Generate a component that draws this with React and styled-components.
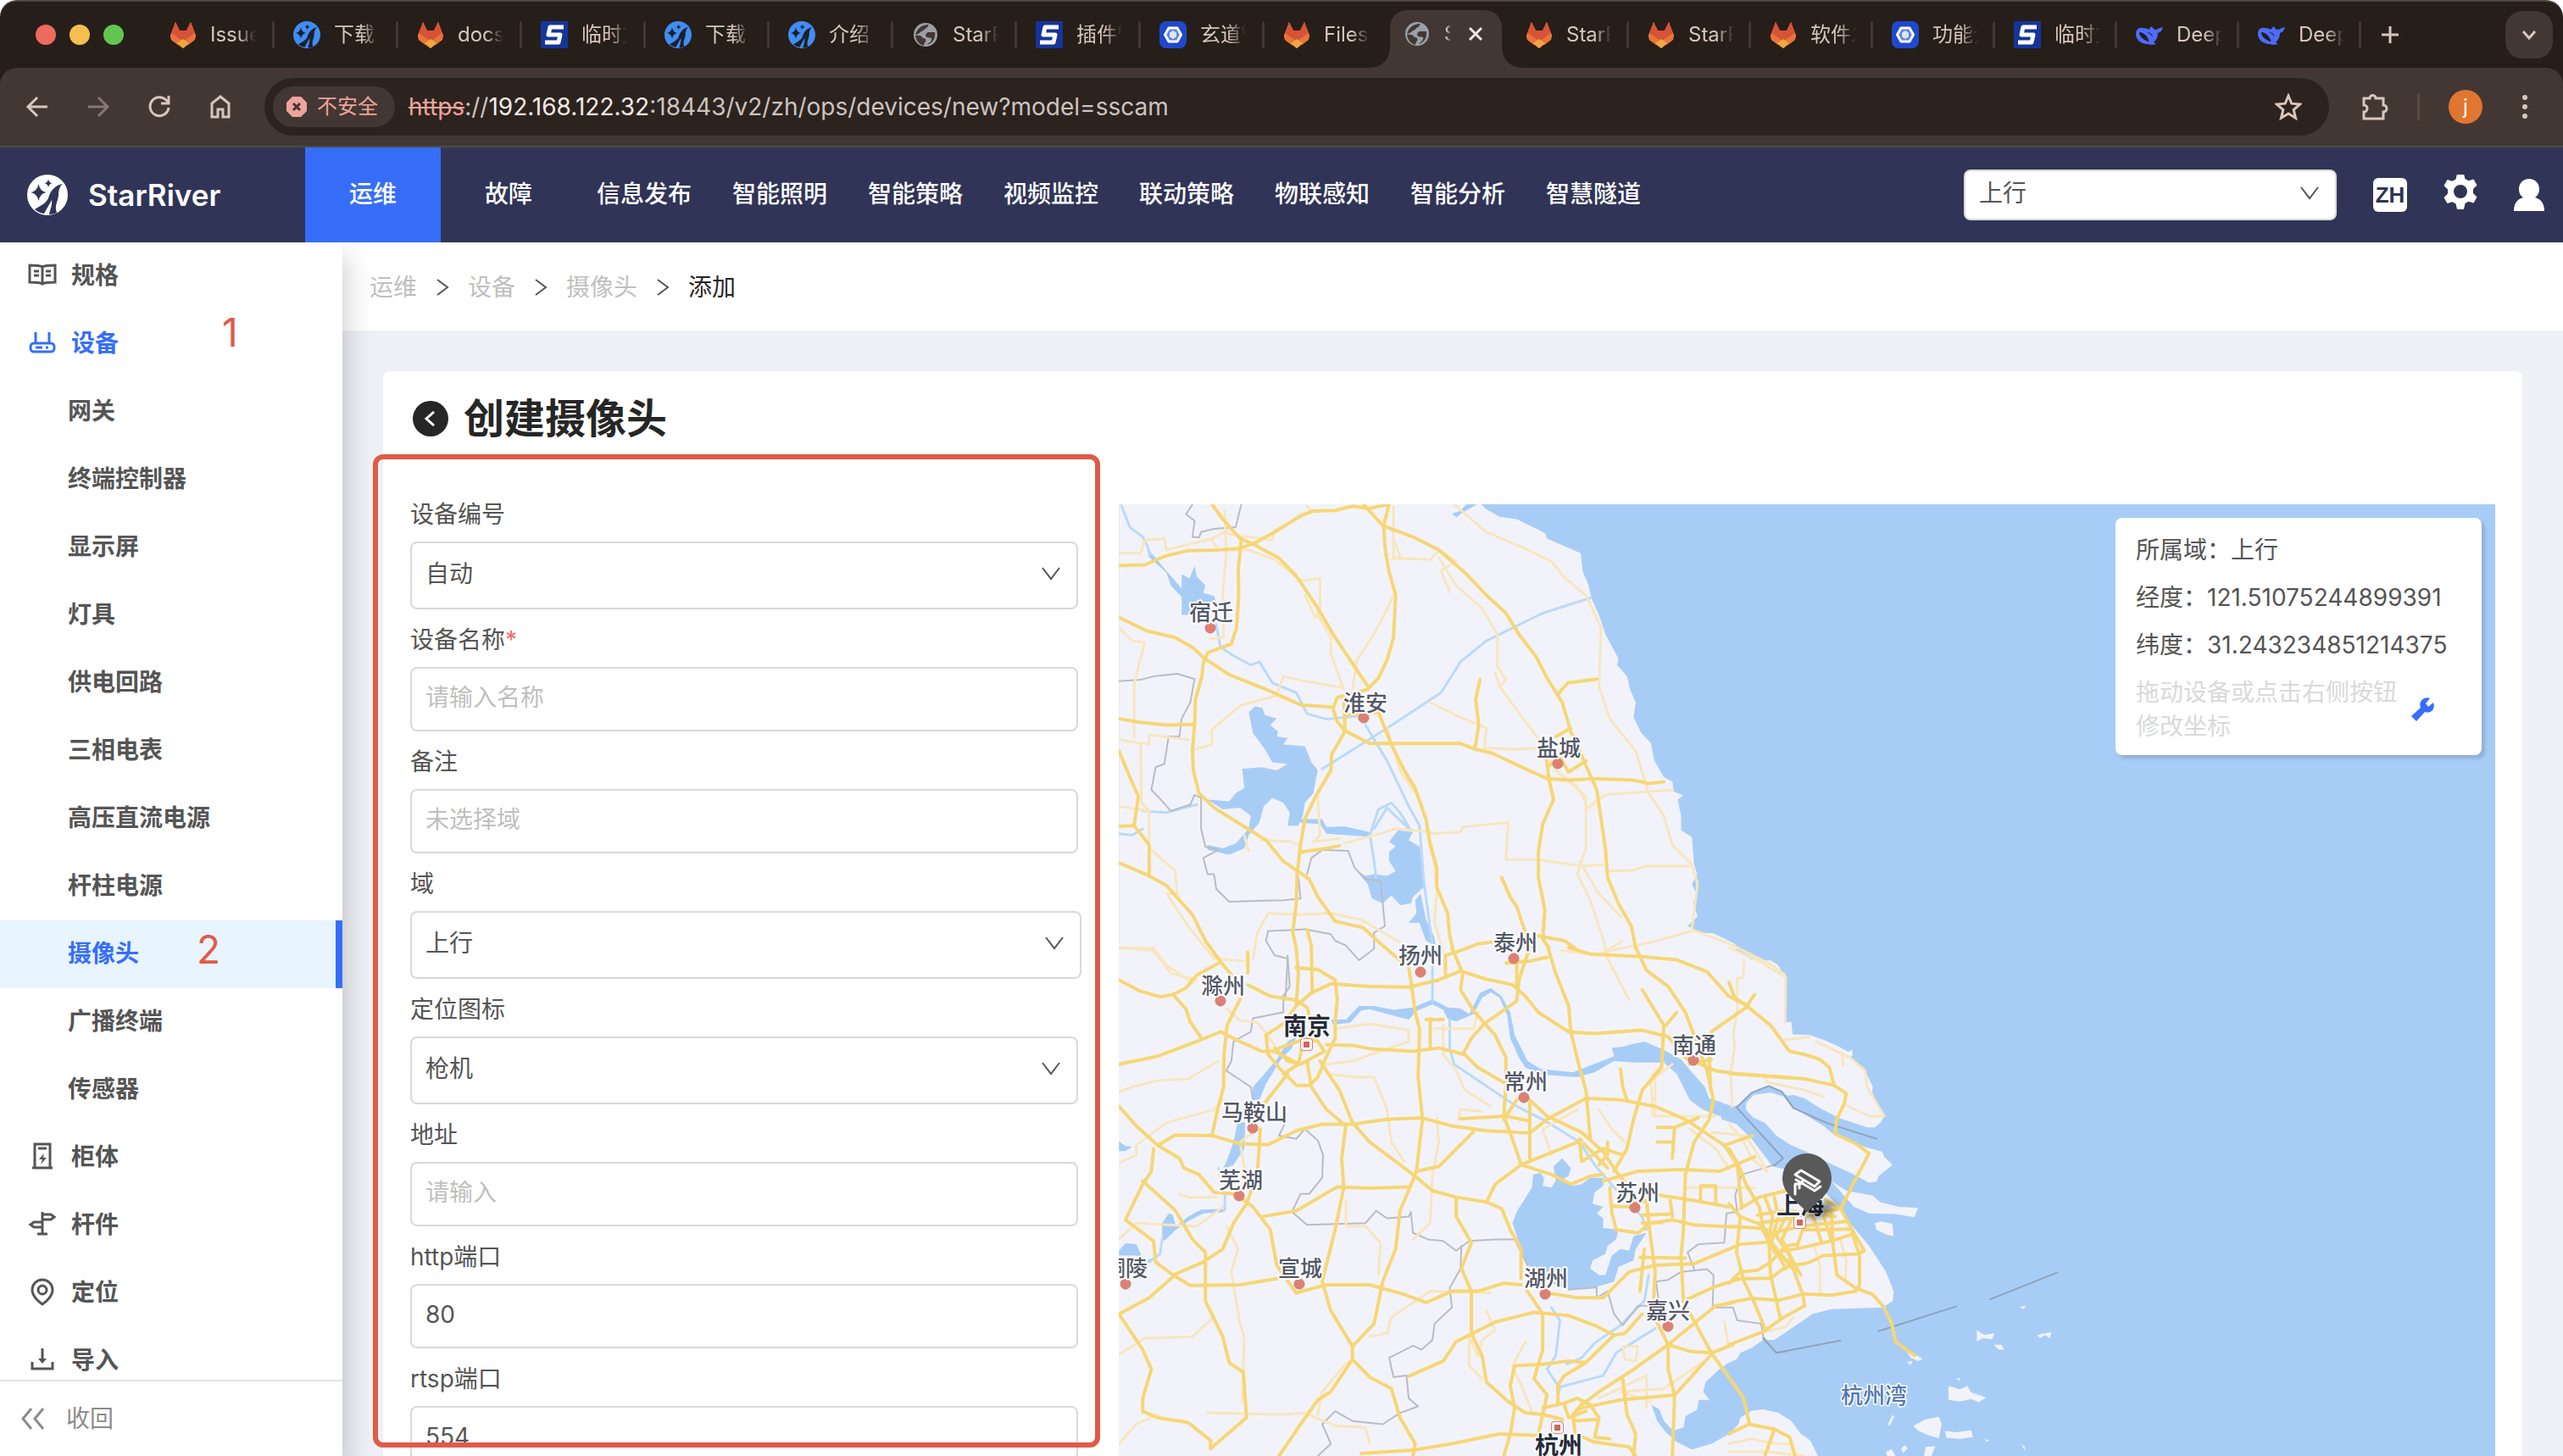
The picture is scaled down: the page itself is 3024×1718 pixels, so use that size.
import React, { useState } from "react";
import styled, { createGlobalStyle, css } from "styled-components";

const GlobalStyle = createGlobalStyle`
  * {
    box-sizing: border-box;
  }

  body {
    margin: 0;
    background: #fff;
    color: #555;
    font-family: Inter, "Noto Sans CJK SC", sans-serif;
    font-size: 28px;
    line-height: 40px;
  }

  button,
  input,
  select {
    font: inherit;
    color: inherit;
  }

  button {
    display: flex;
    align-items: center;
    justify-content: center;
    padding: 0;
    border: 0;
    background: none;
    cursor: pointer;
  }

  a {
    color: inherit;
    text-decoration: none;
  }

  svg {
    display: block;
    flex: none;
  }
`;

const Shell = styled.div`
  display: flex;
  flex-direction: column;
  height: 100vh;
  overflow: hidden;
`;

/* browser chrome */

const Browser = styled.div`
  flex: none;
  border-top: 2px solid #4c4744;
  border-radius: 20px 20px 0 0;
  background: #261e18;
  color: #d8c6bc;
  font-size: 24px;
`;

const TabStrip = styled.div`
  display: flex;
  align-items: center;
  height: 78px;
  padding-right: 12px;
`;

const TrafficLights = styled.div`
  display: flex;
  gap: 16px;
  width: 178px;
  padding-left: 42px;
`;

const Light = styled.span`
  width: 24px;
  height: 24px;
  border-radius: 50%;
  background: ${props => props.$color};
`;

const Tab = styled.button`
  position: relative;
  justify-content: flex-start;
  gap: 16px;
  width: ${props => (props.$wide ? 146 : 144)}px;
  height: 32px;
  padding-left: 22px;

  &::after {
    content: "";
    width: 3px;
    height: 32px;
    margin-left: auto;
    border-radius: 2px;
    background: ${props => (props.$last ? "transparent" : "#433733")};
  }
`;

const TabText = styled.span`
  width: 54px;
  overflow: hidden;
  text-align: left;
  white-space: nowrap;
  mask-image: linear-gradient(90deg, #000 60%, transparent);
`;

const ActiveTab = styled.div`
  position: relative;
  display: flex;
  align-items: center;
  align-self: flex-end;
  width: 132px;
  height: 68px;
  margin: 0 6px 0 2px;
  padding: 0 22px 12px 16px;
  border-radius: 20px 20px 0 0;
  background: #433733;
  color: #f3e6df;

  &::before,
  &::after {
    content: "";
    position: absolute;
    bottom: 0;
    width: 22px;
    height: 22px;
  }

  &::before {
    right: 100%;
    background: radial-gradient(circle at 0 0, transparent 21px, #433733 22px);
  }

  &::after {
    left: 100%;
    background: radial-gradient(
      circle at 100% 0,
      transparent 21px,
      #433733 22px
    );
  }
`;

const ActiveTitle = styled.span`
  width: 8px;
  margin: 0 auto 0 16px;
  overflow: hidden;
  mask-image: linear-gradient(90deg, #000 20%, transparent);
`;

const NewTab = styled.button`
  width: 68px;
  height: 40px;
`;

const TabSearch = styled.button`
  width: 56px;
  height: 56px;
  margin-left: auto;
  border-radius: 20px;
  background: #433733;
`;

const Toolbar = styled.div`
  display: flex;
  align-items: center;
  height: 94px;
  border-bottom: 2px solid #4b4a45;
  border-radius: 20px 20px 0 0;
  background: #433733;
`;

const ToolButtons = styled.div`
  display: flex;
  width: 312px;
  padding-left: 8px;
`;

const ToolButton = styled.button`
  width: 72px;
  height: 48px;
  opacity: ${props => (props.$dim ? 0.45 : 1)};
`;

const AddressBar = styled.div`
  display: flex;
  flex: 1;
  align-items: center;
  height: 68px;
  padding: 0 32px 0 10px;
  border-radius: 34px;
  background: #2c231e;
`;

const Unsafe = styled.button`
  justify-content: flex-start;
  gap: 12px;
  width: 144px;
  height: 48px;
  padding-left: 16px;
  border-radius: 24px;
  background: #433733;
  color: #eca49c;
`;

const Url = styled.span`
  flex: 1;
  padding-left: 16px;
  color: #cdc4bf;
  font-size: 28px;
  white-space: nowrap;

  s {
    color: #eca49c;
  }

  b {
    color: #f3eae5;
    font-weight: 400;
  }
`;

const ToolbarEnd = styled.div`
  display: flex;
  align-items: center;
  gap: 34px;
  width: 276px;
  padding-left: 38px;
`;

const ToolDivider = styled.span`
  width: 3px;
  height: 32px;
  background: #5d4a41;
`;

const Avatar = styled.button`
  width: 40px;
  height: 40px;
  border-radius: 50%;
  background: #e0762f;
  color: #fff;
`;

/* application header */

const Header = styled.header`
  display: flex;
  flex: none;
  align-items: center;
  height: 112px;
  padding-right: 22px;
  background: #303457;
  color: #fff;
`;

const Brand = styled.a`
  display: flex;
  align-items: center;
  gap: 24px;
  width: 360px;
  padding-left: 32px;
  font-size: 35px;
  font-weight: 600;
`;

const Nav = styled.nav`
  display: flex;
  flex: 1;
  height: 100%;
`;

const NavItem = styled.a`
  display: flex;
  align-items: center;
  justify-content: center;
  width: 160px;
  padding-bottom: 2px;
  background: ${props => (props.$active ? "#366ef9" : "transparent")};
  font-weight: 500;
`;

const HeaderTools = styled.div`
  display: flex;
  align-items: center;
  gap: 43px;
`;

const LangBadge = styled.button`
  width: 40px;
  height: 40px;
  border-radius: 6px;
  background: #fff;
  color: #303457;
  font-family: "Liberation Sans", sans-serif;
  font-size: 26px;
  font-weight: 700;
`;

/* form controls */

const controlBox = css`
  width: 100%;
  height: ${props => props.$height || 76}px;
  padding: 0 16px 4px;
  border: 2px solid #d9d9d9;
  border-radius: 8px;
  background: #fff;
  outline: none;
`;

const SelectWrap = styled.div`
  position: relative;
  width: ${props => props.$width};
  color: #555;
`;

const SelectBox = styled.select`
  ${controlBox}
  appearance: none;
`;

const SelectArrow = styled.span`
  position: absolute;
  top: calc(50% - 14px);
  right: 20px;
  pointer-events: none;
`;

const TextBox = styled.input`
  ${controlBox}

  &::placeholder {
    color: #bfbfbf;
    opacity: 1;
  }
`;

/* side menu */

const Body = styled.div`
  display: flex;
  flex: 1;
  min-height: 0;
`;

const Sidebar = styled.aside`
  z-index: 1;
  display: flex;
  flex: none;
  flex-direction: column;
  width: 404px;
  background: #fff;
  box-shadow: 4px 16px 32px rgba(0, 0, 0, 0.2);
  clip-path: inset(0 -40px 0 0);
`;

const Menu = styled.nav`
  flex: 1;
  overflow: hidden;
`;

const MenuItem = styled.a`
  position: relative;
  display: flex;
  align-items: center;
  gap: 16px;
  height: 80px;
  padding: 0 0 2px ${props => (props.$sub ? 80 : 32)}px;
  border-right: 8px solid ${props => (props.$selected ? "#366ef9" : "transparent")};
  background: ${props => (props.$selected ? "#e8f4ff" : "transparent")};
  color: ${props => (props.$active ? "#366ef9" : "#555")};
  font-weight: 600;
`;

const Mark = styled.span`
  position: absolute;
  top: ${props => props.$top}px;
  left: ${props => props.$left}px;
  color: #e05a47;
  font-size: 46px;
  font-weight: 400;
`;

const Collapse = styled.button`
  justify-content: flex-start;
  gap: 26px;
  height: 90px;
  padding-left: 24px;
  border-top: 2px solid #e4e4e4;
  color: #8c8c8c;
`;

/* page */

const Main = styled.main`
  position: relative;
  display: flex;
  flex: 1;
  flex-direction: column;
  min-width: 0;
  overflow: hidden;
  background: #eff0f5;
`;

const Breadcrumb = styled.nav`
  display: flex;
  flex: none;
  align-items: center;
  gap: 20px;
  height: 104px;
  padding: 2px 0 0 32px;
  background: #fff;
  color: #bfbfbf;
`;

const CurrentCrumb = styled.span`
  color: #262626;
`;

const Card = styled.section`
  flex: none;
  margin: 48px 48px 0;
  padding: 24px 32px;
  border-radius: 8px;
  background: #fff;
`;

const TitleRow = styled.div`
  display: flex;
  align-items: center;
  gap: 18px;
  height: 64px;
  padding-left: 3px;
`;

const Title = styled.h1`
  margin: 0;
  color: #262626;
  font-size: 48px;
  font-weight: 700;
  line-height: 64px;
`;

const BackButton = styled.button`
  width: 42px;
  height: 42px;
  border-radius: 50%;
  background: #262626;
`;

const Columns = styled.div`
  display: flex;
  gap: 44px;
  margin-top: 69px;
`;

const Form = styled.form`
  flex: none;
  width: 792px;
  margin-top: -8px;
`;

const Field = styled.div`
  margin-bottom: 16px;
`;

const FieldLabel = styled.label`
  display: block;
  height: 52px;

  span {
    color: #f56c6c;
  }
`;

const FieldControl = styled.div`
  width: ${props => (props.$full ? "100%" : "788px")};
`;

const FocusFrame = styled.div`
  position: absolute;
  top: 250px;
  bottom: 10px;
  left: 36px;
  width: 858px;
  border: 6px solid #e05a47;
  border-radius: 12px;
  pointer-events: none;
`;

const MapPane = styled.div`
  position: relative;
  flex: 1;
  min-width: 0;
  overflow: hidden;
  background: #a7cdf7;

  > svg {
    position: absolute;
    width: 100%;
    height: 100%;
  }
`;

const InfoCard = styled.div`
  position: absolute;
  top: 16px;
  right: 16px;
  width: 432px;
  height: 280px;
  padding: 10px 24px;
  border-radius: 8px;
  background: #fff;
  box-shadow: 4px 4px 4px rgba(0, 0, 0, 0.15);
`;

const InfoLine = styled.div`
  height: 56px;
  line-height: 56px;
  white-space: nowrap;
`;

const InfoHint = styled.div`
  display: flex;
  align-items: center;
  gap: 16px;
  padding-top: 8px;
  color: #d9d9d9;

  p {
    width: 308px;
    margin: 0;
  }
`;

/* icons */

const Logo = ({ size, color = "#fff", cut = "#303457" }) => (
  <svg width={size} height={size} viewBox="0 0 48 48">
    <circle cx="24" cy="24" r="24" fill={color} />
    <g fill={cut}>
      <path d="M13.500 11q1.500 8.500 9 10q-7.500 1.500-9 10q-1.500-8.500-9-10q7.500-1.500 9-10z" />
      <path d="M25 5.500q.8 4 4.500 4.700q-3.700.8-4.500 4.800q-.8-4-4.500-4.800q3.700-.7 4.500-4.700z" />
      <path d="M42 11c-9 1-15 9-17 17-3 6-8 8-16 13 3 3 7 4.500 11 5l9-16c1 6-2 11-3 17 4 0 7-1 9-2-3-9 1-12 2-20 0-6 1-11 5-14z" />
    </g>
  </svg>
);

const Fox = () => (
  <svg width="32" height="32" viewBox="0 0 32 32">
    <path d="M7 1l5 10h8l5-10 6 16-2 5-13 10L2 22l-1-5z" fill="#e9743a" />
    <path d="M7 1l5 10h8l5-10 5 13-14 10L2 14z" fill="#d75337" />
    <path d="M1 17l1-3 14 10-6 4-8-6zM31 17l-1-3-14 10 6 4 8-6z" fill="#e9743a" />
    <path d="M9 26l7-5 7 5-7 6z" fill="#efa740" />
  </svg>
);

const SquareS = () => (
  <svg width="32" height="32" viewBox="0 0 32 32">
    <path fill="#16349a" d="M0 0h32v32H0z" />
    <path
      d="M27 7H11l-2 9h14l-2 9H5"
      fill="none"
      stroke="#fff"
      strokeWidth="5"
      strokeLinejoin="round"
    />
  </svg>
);

const Hexagon = () => (
  <svg width="32" height="32" viewBox="0 0 32 32">
    <rect width="32" height="32" rx="8" fill="#1f48cd" />
    <path
      d="M11 8h10l4.500 8L21 24H11l-4.500-8z"
      fill="#5c83e6"
      stroke="#fff"
      strokeWidth="3"
      strokeLinejoin="round"
    />
    <path d="M16 11l4 2.500v5L16 21l-4-2.500v-5z" fill="#dbe5fb" />
  </svg>
);

const Globe = () => (
  <svg width="32" height="32" viewBox="0 0 32 32">
    <circle cx="16" cy="16" r="14" fill="#9aa0a6" />
    <path
      d="M20 4c-2 2-1 4-5 5-1 3-4 2-6 5-2 1-4 2-5 2 2-7 7-12 16-12zM4 17c4-1 8 0 9 3 3 0 4 2 3 4-1 2-2 2-2 5C8 27 5 23 4 17zM19 13h8c1 8-3 13-9 15 2-3 6-4 5-8-3-1-6 0-7-3 0-2 1-3 3-4z"
      fill="#433733"
    />
  </svg>
);

const Whale = () => (
  <svg width="32" height="32" viewBox="0 0 32 32">
    <path
      d="M19 6c1 3 3 4 5 4 2-1 4-2 8-3-1 4-3 6-6 7 0 5-2 8-5 11l3 2c-4 1-7 1-10 0C6 27 0 22 0 15 0 9 4 7 9 8c3 0 5 1 6 2 1-1 2-3 4-4zM4 13c0 5 5 9 11 11 1-1 0-3-3-7-2-2-5-4-8-4zm9 0c3 1 5 3 7 6-1-4-3-6-7-6z"
      fill="#4d6bfe"
      fillRule="evenodd"
    />
  </svg>
);

const favicons = {
  fox: <Fox />,
  star: <Logo size={32} color="#3f8df5" cut="#1c2028" />,
  s: <SquareS />,
  hex: <Hexagon />,
  globe: <Globe />,
  whale: <Whale />,
};

const Line = ({ size = 32, stroke = 3, color = "currentColor", d, children }) => (
  <svg
    width={size}
    height={size}
    viewBox={`0 0 ${size} ${size}`}
    fill="none"
    stroke={color}
    strokeWidth={stroke}
  >
    {d && <path d={d} />}
    {children}
  </svg>
);

const ArrowDown = () => <Line size={24} stroke={2} d="M2 5l10 13L22 5" />;

const Gear = () => (
  <svg width="40" height="48" viewBox="1 1 40 48">
    <path
      d="M17 0h8l1.500 6 4 2.300 6-1.800 4 7-4.500 4.500v5l4.500 4.500-4 7-6-1.800-4 2.300L25 42h-8l-1.500-6.500-4-2.300-6 1.800-4-7L6 23.500v-5L1.500 14l4-7 6 1.800 4-2.300zM21 13a8 8 0 100 16 8 8 0 000-16z"
      fill="#fff"
      fillRule="evenodd"
    />
  </svg>
);

const Person = () => (
  <svg width="36" height="38" viewBox="0 0 36 38">
    <path
      d="M18 0c7 0 12 5 12 12 0 5-2 8-5 10 7 2 11 7 11 16H0c0-9 4-14 11-16-3-2-5-5-5-10C6 5 11 0 18 0z"
      fill="#fff"
    />
  </svg>
);

const menuIcons = {
  book: (
    <Line size={36} stroke={3}>
      <path d="M18 8c-3-2-9-2-15-2v20c6 0 12 0 15 2 3-2 9-2 15-2V6c-6 0-12 0-15 2zv20M8 13h6M8 18h6M22 13h6M22 18h6" />
    </Line>
  ),
  router: (
    <Line size={36} stroke={3}>
      <rect x="4" y="18" width="28" height="10" rx="4" />
      <path d="M10 5v13M26 5v13M10 23h8M22 23h3" />
    </Line>
  ),
  cabinet: (
    <Line size={36} stroke={3}>
      <path d="M9 31V3h18v28M6 31h24M13 8h10" />
      <path d="M20 14l-6 7h4l-2 6 7-8h-4z" fill="currentColor" stroke="none" />
    </Line>
  ),
  pole: (
    <Line size={36} stroke={3}>
      <path d="M18 3v26M12 29h12M18 6h10l4 3-4 3H18zM18 15H8l-4 3 4 3h10z" />
    </Line>
  ),
  pin: (
    <Line size={36} stroke={3}>
      <path d="M18 32C11 27 6 22 6 15a12 12 0 0124 0c0 7-5 12-12 17z" />
      <circle cx="18" cy="15" r="5" />
    </Line>
  ),
  load: (
    <Line size={36} stroke={3}>
      <path d="M6 20v8h24v-8M18 4v15" />
      <path d="M13 16h10l-5 6z" fill="currentColor" stroke="none" />
    </Line>
  ),
};

/* data */

const tabsBefore = [
  ["fox", "Issues"],
  ["star", "下载"],
  ["fox", "docs"],
  ["s", "临时文"],
  ["star", "下载"],
  ["star", "介绍"],
  ["globe", "StarRiver"],
  ["s", "插件管"],
  ["hex", "玄道管"],
  ["fox", "Files"],
];

const tabsAfter = [
  ["fox", "StarRiver"],
  ["fox", "StarRiver"],
  ["fox", "软件发"],
  ["hex", "功能介"],
  ["s", "临时文"],
  ["whale", "DeepSeek"],
  ["whale", "DeepSeek"],
];

const navItems = [
  "运维",
  "故障",
  "信息发布",
  "智能照明",
  "智能策略",
  "视频监控",
  "联动策略",
  "物联感知",
  "智能分析",
  "智慧隧道",
];

const menuItems = [
  { text: "规格", icon: "book" },
  { text: "设备", icon: "router", active: true, mark: { text: "1", left: 262, top: 6 } },
  { text: "网关" },
  { text: "终端控制器" },
  { text: "显示屏" },
  { text: "灯具" },
  { text: "供电回路" },
  { text: "三相电表" },
  { text: "高压直流电源" },
  { text: "杆柱电源" },
  {
    text: "摄像头",
    active: true,
    selected: true,
    mark: { text: "2", left: 232, top: 14 },
  },
  { text: "广播终端" },
  { text: "传感器" },
  { text: "柜体", icon: "cabinet" },
  { text: "杆件", icon: "pole" },
  { text: "定位", icon: "pin" },
  { text: "导入", icon: "load" },
];

const fields = [
  { id: "code", label: "设备编号", options: ["自动", "手动"] },
  { id: "name", label: "设备名称", required: true, placeholder: "请输入名称" },
  { id: "remark", label: "备注", placeholder: "未选择域" },
  { id: "domain", label: "域", options: ["上行", "下行"], full: true },
  { id: "icon", label: "定位图标", options: ["枪机", "球机"] },
  { id: "address", label: "地址", placeholder: "请输入" },
  { id: "http", label: "http端口", value: "80" },
  { id: "rtsp", label: "rtsp端口", value: "554" },
];

/* Map tiles. Every tile has its own grid, the transform puts it on the map. */

const TILE_NORTH = "translate(-10 -15) scale(.5102 .38265)";
const TILE_SOUTH = "translate(-10 523) scale(.5102 .38265)";
const TILE_EAST = "translate(720 523) scale(.44643 .38265)";

const landNorth =
  "20,0 850,30 870,55 900,78 940,85 1005,128 1010,145 1088,190 1092,245 1105,285 1113,330 1130,380 1145,440 1175,515 1172,535 1195,570 1202,610 1215,650 1210,695 1228,745 1250,775 1258,830 1280,880 1300,895 1303,925 1325,937 1312,950 1320,1000 1320,1045 1345,1065 1350,1150 1357,1180 1345,1210 1355,1240 1348,1270 1358,1310 1335,1340 1365,1360 1395,1362 1445,1395 1448,1412 1448,1568 20,1568";

const landEast =
  "-1630,-10 0,0 60,38 110,40 130,55 150,95 152,170 145,215 147,230 165,230 168,268 215,270 250,285 290,305 315,322 325,315 327,330 322,338 360,380 380,430 378,445 395,490 410,520 400,540 385,555 365,555 290,525 240,495 200,465 170,455 155,457 110,428 80,435 20,490 -20,500 -20,530 20,545 60,590 115,675 150,685 210,700 250,750 295,805 320,850 370,920 415,1000 435,1060 433,1090 405,1110 270,1115 220,1130 165,1175 120,1210 90,1210 60,1235 30,1250 20,1270 0,1280 -20,1295 -62,1340 -68,1370 -52,1395 -80,1395 -84,1425 -115,1445 -120,1480 -148,1490 -172,1460 -184,1425 -205,1410 -190,1460 -167,1495 -138,1525 -98,1548 -46,1530 0,1500 25,1470 30,1450 60,1428 90,1424 130,1435 165,1460 190,1500 215,1520 235,1568 260,1800 -1630,1800";

const islands = [
  "45,480 65,455 110,447 145,460 165,490 200,515 250,550 275,575 310,590 345,610 405,630 410,645 432,670 395,705 390,722 370,725 330,700 270,668 215,635 165,610 125,580 95,540 65,525 45,500",
  "270,720 310,750 380,765 400,785 450,800 500,803 490,832 440,822 370,820 330,800 300,760",
  "385,850 400,845 432,852 435,890 415,885 390,870",
  "470,1245 490,1255 512,1268 500,1275 480,1265",
  "470,1278 485,1275 480,1288",
  "655,1180 675,1195 702,1190 695,1208 670,1205 655,1215",
  "700,1225 720,1225 727,1240 712,1240",
  "768,1108 785,1105 778,1116",
  "815,1195 852,1186 848,1205 835,1195 822,1205",
  "580,1352 610,1362 630,1352 640,1372 680,1388 660,1402 640,1392 610,1400 580,1395",
  "600,1328 612,1328 608,1336",
  "487,1475 520,1455 555,1447 562,1470 555,1513 530,1505 500,1490",
  "570,1490 600,1495 640,1488 645,1510 610,1515 575,1512",
  "432,1442 437,1445 425,1475 420,1470",
  "520,1540 545,1538 535,1568 515,1568",
  "415,1555 430,1548 440,1568 418,1568",
  "455,1545 465,1535 472,1545 460,1558",
  "772,1532 782,1540 782,1552",
  "676,1515 688,1520 682,1524",
];

const lakesNorth = [
  "790,68 808,60 825,38 850,38 815,65 800,80",
  "85,160 92,185 130,245 150,275 165,300 165,255 183,268 195,230 200,262 220,290 215,312 240,322 245,345 225,340 205,345 190,380 165,380 165,325 140,290 130,250 88,200",
  "320,680 335,662 352,668 358,690 385,700 370,720 388,740 385,755 410,760 400,780 450,785 465,835 480,860 475,890 470,930 450,960 445,1000 435,1030 410,1030 415,990 400,960 375,945 355,970 345,1020 320,1060 310,1100 275,1120 225,1105 225,1090 260,1100 290,1085 320,1040 325,1000 300,975 260,980 225,950 275,955 290,930 310,915 305,855 350,850 385,860 410,840 375,835 355,790 330,745",
  "665,1045 700,1050 690,1075 715,1095 720,1130 725,1220 700,1250 695,1270 670,1275 650,1245 630,1270 605,1255 595,1210 570,1170 590,1185 610,1180 640,1185 660,1170 645,1140 645,1110 660,1095 645,1080",
  "690,1330 708,1300 705,1260 718,1240 730,1320 750,1375 752,1400 730,1385 715,1330",
  "440,1010 490,1010 500,1035 540,1032 600,1050 600,1065 550,1060 500,1055 485,1025 440,1022",
];

const lakesSouth = [
  "930,850 940,815 975,740 978,700 995,695 1003,710 1000,735 1020,740 1030,720 1025,675 1045,650 1065,680 1060,705 1045,715 1070,735 1090,730 1110,710 1140,710 1140,735 1120,755 1115,790 1140,800 1125,820 1140,835 1140,865 1175,870 1170,900 1150,920 1145,945 1115,965 1110,990 1130,1010 1145,1010 1160,950 1180,930 1200,935 1210,890 1240,880 1215,930 1210,965 1175,985 1165,1030 1120,1048 1060,1055 1020,1035 985,990 965,980 950,930",
  "1095,372 1165,335 1160,310 1190,305 1200,300 1235,290 1275,312 1320,345 1345,385 1375,430 1385,465 1440,490 1455,485 1460,535 1430,530 1370,500 1340,470 1310,390 1280,355 1215,355 1165,350 1120,385 1080,400 1000,392 960,370 1000,375 1070,385",
  "510,222 545,222 575,180 610,180 655,192 700,185 745,160 780,185 810,188 830,205 855,140 880,125 905,150 925,200 935,270 965,350 1000,378 1000,395 960,370 945,340 925,280 918,210 900,155 880,138 860,155 840,205 800,228 780,220 770,192 745,175 710,195 690,222 640,205 600,190 580,195 555,232 515,238",
  "410,290 430,275 420,310 395,345 360,420 345,470 328,470 330,430 350,400 385,345",
  "295,535 312,540 310,620 285,670 260,685 270,655 285,600",
  "120,895 120,850 135,820 145,825 152,860 180,830 210,808 262,806 262,816 215,820 185,840 150,872 125,905",
  "20,935 35,912 60,915 72,950 85,965 100,955 85,980 60,950 20,950",
  "20,598 35,612 50,615 35,628 20,628",
];

const riversNorth = [
  "25,40 45,110 75,140 85,165 92,195",
  "1110,328 1000,375 870,460 810,525 765,620 640,730 490,855",
  "245,410 255,480 290,510 325,535 345,525 375,590 430,620 455,685 500,702 590,690",
  "590,720 640,830 690,970 715,1030 725,1200 745,1400",
  "600,1055 610,1140 615,1190",
  "600,1060 620,980 650,960 670,990 695,1045 640,975 610,1040",
  "75,985 130,990 200,965",
  "20,1055 50,1060 75,1040",
];

const riversSouth = [
  "745,0 745,165",
  "785,220 785,310 795,360 940,490 1000,530 1085,600 1120,670 1165,740 1230,830 1240,870",
  "265,760 265,810",
  "250,680 258,710",
  "1245,1010 1235,1090 1180,1165 1120,1220 1090,1265 1055,1285",
  "1260,1175 1170,1250 1140,1320 1040,1355 1035,1390",
  "1020,1110 1040,1150 1030,1260 1010,1300 1035,1350",
  "120,900 115,945 90,970",
];

const bordersNorth = [
  "303,39 290,110 240,115 210,125 205,142 190,140 195,90 175,70 190,40",
  "20,585 70,580 100,570 155,562 195,578 185,650 165,700 160,755 135,755 125,840 105,850 95,920 110,940 140,985 185,965 195,935 210,945 210,1040 220,1095 250,1105 215,1130 225,1180 240,1180 245,1225 275,1265 340,1262 400,1260 440,1255 435,1190",
  "455,1180 465,1130 490,1105 550,1108 565,1160 590,1195 625,1200 635,1340 610,1360 610,1410 575,1445 545,1400 520,1385 510,1365 450,1350 365,1355 360,1385 380,1430 410,1440 405,1568",
];

const bordersSouth = [
  "410,25 415,120 400,150 400,200 330,218 325,260 285,290 280,350 268,380 325,430 330,470",
  "405,540 390,580 430,590 450,560 480,595 492,640 490,710 460,760 440,760 420,815 455,855 590,850 615,812 640,835 690,830 695,815 700,880 735,900 770,905 800,935 830,905 890,900 935,900 965,980",
  "812,920 810,990 785,1050 790,1110 750,1160 745,1210 720,1240 700,1228 645,1265 655,1325 685,1320 690,1390 712,1415 670,1435 630,1470 560,1460 520,1430 490,1470 510,1530 480,1568",
  "1060,1055 1125,1048 1125,1080 1150,1060 1165,1130 1185,1165 1220,1105 1270,1105 1262,1030 1290,1025 1320,1000 1380,992 1395,1010 1393,1110 1440,1110 1450,1150 1505,1160 1510,1200 1540,1248 1568,1248",
  "1350,990 1335,940 1360,915 1420,910 1425,820 1450,815 1445,765 1460,700 1500,685 1535,670",
];

const bordersEast = [
  "120,672 143,650 20,493 60,448 105,427 140,445 170,495 260,542 390,590",
  "90,1205 125,1250 295,1212",
  "395,1183 600,1107",
  "690,1085 868,1002",
];

const minorNorth = [
  "20,190 70,190 80,150 125,145 130,180 235,145 270,120",
  "265,60 268,200 260,310 262,450 230,455",
  "232,145 250,180 320,180 380,210 440,275 485,268 485,360 475,390 450,320",
  "455,45 465,60 380,120 375,150 270,130",
  "655,45 655,205 740,210 760,180 800,215 765,245 785,310",
  "650,210 670,200 660,160",
  "760,205 800,290 860,360 895,440 895,540 915,580 900,600 890,560",
  "900,600 960,710 1000,780 1030,860 1080,910 1100,960 1100,1100 1080,1180 1110,1260 1140,1380 1150,1440 1200,1568",
  "795,40 870,125 950,170 1020,215 1050,265 1100,320 1135,420 1130,600 1155,700 1215,800 1245,930 1280,1000 1300,1090 1345,1150 1358,1210 1345,1350 1440,1400 1530,1460 1560,1490",
  "740,650 800,690 870,730 865,790 940,795 1000,790",
  "655,320 630,390 605,450 570,520 560,610",
  "385,625 400,570 450,585 540,605",
  "385,630 300,660 235,735 235,780 195,795",
  "480,380 510,450 510,500 540,610",
  "20,420 50,460 80,465 65,540 55,600 55,760",
  "20,765 90,780 90,750 180,765",
  "70,780 72,960 90,985 90,1100 150,1170 155,1240 130,1240 180,1340 240,1440 310,1448",
  "20,970 90,985",
  "740,1055 810,1050 815,1035 920,1020 915,1135 990,1135 1090,1155 1140,1150",
  "1145,1170 1210,1168 1240,1155 1345,1155",
  "1100,980 1145,935 1300,920",
  "540,1085 610,1060 660,1040 740,1050",
  "480,940 485,1060 470,1080 530,1070",
  "310,1060 320,1110",
  "350,1075 420,1080 440,1095",
  "20,1408 100,1408 130,1460 190,1515",
  "330,1440 340,1360 365,1300 440,1305 510,1300 580,1320 670,1390",
  "1030,860 1100,940 1100,980",
  "1085,1140 1130,1240 1180,1310",
  "1040,1415 1130,1430 1185,1385",
  "1140,1420 1250,1390 1345,1355",
  "745,1090 755,1230 750,1330 770,1420",
  "640,730 670,860 720,960",
];

const minorSouth = [
  "20,0 100,10 140,80 200,100",
  "20,445 50,430 110,410 180,405 250,350",
  "20,665 60,640 60,610 130,540 240,500 260,470",
  "270,190 300,225 340,230 380,300",
  "520,250 600,235 690,255 690,290 560,350 500,360",
  "500,390 570,400 610,400 640,500 650,600 680,660",
  "340,560 300,600 310,680 290,720 250,700",
  "755,525 760,600 745,700 740,850 700,900",
  "545,780 545,860 590,860 625,910 620,1010",
  "20,900 60,850 200,860 260,800",
  "160,760 180,770 245,770",
  "270,860 295,930 280,1000 300,1160 310,1200 305,1400",
  "20,1255 80,1205 190,1200 240,1140",
  "225,1435 330,1438 400,1440 450,1435 520,1475 590,1480 600,1530",
  "480,1440 490,1370 540,1290 560,1270",
  "600,1200 640,1190 650,1140 740,1060 880,1065",
  "870,1120 890,1180 860,1210 850,1260 830,1200 830,1290 860,1330",
  "960,1215 930,1290 960,1380 975,1430",
  "1185,1230 1220,1230 1215,1275 1190,1270 1185,1230",
  "1250,1400 1180,1370 1280,1360 1380,1270",
  "1255,520 1250,400 1280,355",
  "1300,360 1260,400 1260,520 1400,520",
  "1340,560 1400,620 1430,680",
  "1130,500 1160,560 1190,600",
  "1020,640 1000,560 1080,500",
  "1420,1155 1430,1230",
  "1330,740 1490,740",
  "1390,570 1470,580 1520,690",
  "770,240 770,330 800,380 820,440 880,490",
  "750,250 840,250 850,200",
  "805,530 810,500 860,505",
  "20,1530 60,1470 110,1440",
  "1130,1390 1240,1320 1240,1420",
];

const minorEast = [
  "40,38 38,92 22,95 22,190 12,265 15,310 5,380 8,490",
  "148,285 215,275",
  "95,400 100,415 200,440 250,460",
  "298,322 302,365",
  "305,485 375,522 410,518",
  "0,0 75,40 150,92 148,230",
  "230,290 320,340 360,380 365,430 410,520",
  "225,920 240,980 240,1065",
  "295,905 310,960 308,1020",
  "95,1185 150,1170 170,1140",
  "0,545 35,590 60,650 95,685",
  "0,1530 60,1515 120,1530 165,1530",
  "0,1555 100,1555 200,1568",
];

const roadsNorth = [
  "20,228 80,226 125,200 180,182 250,180 300,175 335,158 380,125 440,75 470,60 520,58 560,45 600,52 645,39",
  "235,39 260,85 300,145 335,165 390,205 430,260 460,320 480,360 520,450 560,530 598,605",
  "303,145 296,240 297,320 292,420 280,470 225,497 215,530 212,570 197,640 195,720 190,800 192,860 205,930 240,975 300,1025 360,1075 400,1140 460,1195 480,1250 520,1325 585,1345 630,1400 670,1445",
  "20,388 85,430 150,450 190,480 215,512 275,565 360,610 440,658 515,665",
  "585,39 630,105 700,140 760,180 820,250 870,320 915,375 945,440 985,510 1010,575 1045,650 1065,740 1095,830 1125,920 1135,1010 1145,1100 1150,1190 1175,1270 1205,1340 1215,1408",
  "645,39 632,105 636,180 645,250 660,318 655,450 640,520 620,575 595,610 525,635 515,670 525,710 543,738 600,777 810,777 845,795 880,805 960,855 1010,885 1060,890 1120,885 1210,890 1245,900 1280,895",
  "543,690 620,680 650,780 680,860 705,915 730,1010 740,1090 755,1160 755,1220 780,1300 785,1370 792,1408",
  "540,640 543,738 512,810 510,860 475,940 450,1010 440,1090 432,1180 430,1270 422,1360 430,1408",
  "855,580 845,640 852,720 843,795",
  "1035,625 1058,590 1125,578",
  "1030,755 1065,730",
  "1005,790 1015,890 1025,950 1000,1025 990,1110 990,1190 1005,1290 1000,1380 1015,1408",
  "1015,845 1040,820 1060,865 1100,830",
  "20,700 60,710 130,720 195,718",
  "20,800 45,880 65,940 55,1030 90,1090 90,1185",
  "20,1032 55,1030",
  "20,1145 90,1185 130,1215 190,1305 220,1385 255,1450 280,1490",
  "438,1112 500,1100 530,1092",
  "905,1190 925,1250 940,1280 960,1360 968,1408",
  "775,1490 775,1430 800,1420 850,1395 890,1388",
  "990,1370 1050,1385 1075,1408",
  "455,1350 465,1400",
  "318,1420 318,1485",
];

const roadsSouth = [
  "20,100 70,135 115,152 145,145 175,125 200,85 255,45",
  "318,115 370,150 430,162 455,185 465,235",
  "145,145 175,190 185,230 210,278",
  "20,360 110,335 200,290 255,260 300,290 350,320 380,320 430,355",
  "300,160 270,240 263,330 262,430 250,490 235,580",
  "430,62 480,68 520,100 525,160 520,230 520,280 495,350 480,400 460,425 430,425 390,370 365,330 360,270 400,235 430,180 465,140 510,112 600,120 690,122 760,100 810,72 870,98 930,115 960,150 990,200 1060,260 1120,265 1230,255 1290,275 1330,340 1400,380 1450,390 1568,402",
  "430,0 435,80 430,180",
  "465,0 467,140",
  "500,300 560,302 600,312 700,320 760,310 820,330 850,370 915,420",
  "455,350 465,430 500,500 545,550",
  "485,350 530,440 560,540 600,600 650,650 700,700 745,750 800,770 870,785 905,805 925,870 950,930 950,1020",
  "380,310 410,350 440,360 495,320 480,290 455,280 390,310",
  "445,300 435,360 400,390",
  "690,60 695,100 705,200 715,250 712,400 722,530 708,690",
  "790,0 815,80 810,130 840,195 890,270 915,340 915,420 910,520 930,590 950,670",
  "740,220 740,305",
  "730,222 770,222",
  "815,330 835,280 865,235 940,165 945,100 970,0",
  "940,20 940,120",
  "915,48 970,42 1010,30",
  "1012,0 1030,80 1060,180 1065,260 1085,370 1100,440 1110,590",
  "20,490 60,550 110,610 160,650 170,680 205,700 240,755 290,760 330,800 370,870 385,980 430,1065 500,1040 600,1040 680,1070 730,1095 790,1060 850,1060 910,1035 950,1040",
  "110,610 150,578 235,580 300,605 365,608 430,565 490,545 560,545 640,530 720,525 790,550 870,565 970,572 1010,530 1100,465 1180,470 1260,490 1330,530 1420,610 1450,670 1460,800",
  "100,620 95,690 75,730 35,840 100,905 105,970 145,1010 185,1042 300,1040 390,1020",
  "145,1010 215,970 260,930 285,850 315,790 340,700 347,560",
  "345,500 410,390",
  "75,720 150,810 190,900 220,940 220,1090 260,1200 275,1280 308,1310 315,1450 232,1545",
  "350,830 430,812 525,738 600,742 690,738",
  "708,690 760,675 840,568",
  "545,545 535,650 540,740 520,870 490,1030 510,1120 560,1230 560,1270 600,1325 650,1360 670,1450 705,1530 700,1568",
  "560,1270 510,1370 480,1395 440,1470 390,1568",
  "708,690 690,750 670,810 660,930 630,1030 610,1160 560,1230",
  "800,770 800,830 835,910 812,990 835,1060 835,1190 860,1260 870,1340 920,1400 960,1435 1000,1440",
  "20,1130 90,1080 145,1015",
  "20,1130 75,1240 95,1300 75,1390 75,1430 110,1450 180,1465 232,1520 232,1545",
  "690,1322 770,1275 800,1215 890,1155 980,1125 1060,1135 1120,1165 1165,1195 1190,1190 1230,1130",
  "960,1050 1000,1130 1000,1240 980,1330 1010,1380 1000,1440 990,1500",
  "870,785 890,730 950,670 1020,700 1065,730 1110,705 1140,700",
  "950,670 1090,595",
  "970,480 970,650",
  "940,470 910,530",
  "810,528 915,520 970,535",
  "970,470 1010,520 1090,570 1140,630 1170,690 1200,740 1215,800",
  "1085,590 1090,660 1140,620 1185,640",
  "1150,600 1150,640 1130,670",
  "1095,605 1150,680",
  "1180,375 1185,430 1195,470",
  "1140,720 1220,690 1320,685 1410,690 1490,645",
  "1265,555 1305,555 1360,525",
  "1305,555 1300,650",
  "1265,600 1300,600",
  "1215,0 1240,70 1290,120 1330,200 1350,270 1380,380 1395,470 1385,530 1350,600 1330,700 1325,880 1320,950 1325,1080",
  "1230,130 1280,240 1275,370 1230,440 1210,530 1195,620 1165,690",
  "1285,240 1310,200",
  "1060,0 1110,20 1230,28 1310,38 1380,75 1430,150 1475,180",
  "1390,260 1470,185 1490,145",
  "1340,360 1390,345",
  "1385,330 1388,440",
  "1155,740 1160,820 1170,870 1220,880 1250,850 1300,840 1350,855 1440,862",
  "1215,790 1240,780 1250,900 1260,1000 1255,1130 1290,1225",
  "1250,760 1350,780 1430,800",
  "1365,780 1365,735 1400,735 1400,790",
  "1230,850 1275,848",
  "1295,780 1300,830",
  "1160,798 1200,800",
  "1230,825 1300,822",
  "1225,955 1330,958",
  "1235,930 1225,1060",
  "1010,1065 1080,1080 1140,1080 1200,1000 1260,980 1350,975 1430,930",
  "1325,1090 1400,1045 1460,1020",
  "1325,1090 1390,1250 1465,1390 1478,1470",
  "1290,1225 1340,1170 1400,1105 1440,1095",
  "1290,1225 1340,1245 1390,1250 1440,1225",
  "1290,1225 1290,1300 1305,1380 1300,1568",
  "1290,1225 1200,1310 1130,1370 1090,1410 1070,1450",
  "1390,1255 1305,1380 1180,1395 1090,1420",
  "1185,1330 1195,1440 1215,1500 1210,1568",
  "1165,1195 1100,1280 1050,1320 1035,1350 1035,1410",
  "1100,1280 1060,1275 1000,1285 935,1290 925,1350 935,1420 925,1500 910,1568",
  "1000,1420 1050,1405 1080,1390 1110,1410 1130,1450 1120,1510 1155,1515",
  "1050,1410 1060,1450 1100,1430",
  "1070,1460 1130,1455",
  "1070,1440 1075,1500 1120,1525 1200,1540 1215,1568",
  "1000,1440 1045,1455",
  "1095,1400 1070,1440",
  "580,1560 700,1550 790,1530 900,1500 1000,1505",
  "1420,610 1485,580",
];

const roadsEast = [
  "0,108 15,155 45,178 110,240 160,320 200,330 240,345 265,370 278,425 310,450 305,480 285,530 280,575 335,605 370,635 330,725 295,805",
  "0,388 100,396 200,405 278,425",
  "0,620 25,670 45,730 80,800 90,860 150,990",
  "30,805 80,770 150,750 220,755 295,805 330,880 358,935 340,945 250,950 210,972 150,985 110,1020 10,1022",
  "0,860 75,865 100,870",
  "0,790 30,830 75,850 200,830 295,805",
  "95,770 115,830 105,900 175,1000",
  "80,850 120,940 175,930 270,905 325,885",
  "75,825 150,810 280,830",
  "100,885 190,860 310,845",
  "120,770 130,830 110,920",
  "150,830 125,890 160,950 190,1010",
  "165,840 140,900 175,980",
  "180,920 195,870 260,870 320,868",
  "270,810 275,920 285,1010 335,1050 380,1070 410,1110 430,1160 440,1215 490,1258",
  "325,880 345,950 345,1040 335,1060 270,1072 200,1068 130,1088 60,1082 0,1095",
  "30,830 20,940 40,1030 65,1090 95,1175",
  "105,900 110,1010 135,1140",
  "0,930 30,915 110,908",
  "0,1035 30,1000 75,995 110,970 150,920 180,915",
  "0,1225 90,1185 145,1140 200,1105 195,1070 160,960",
  "0,1500 52,1470 120,1485 160,1510 175,1568",
  "120,1485 95,1568",
  "220,820 245,910",
  "245,810 270,900",
];

const cities = [
  { name: "宿迁", x: 109, y: 127, dot: [108, 146] },
  { name: "淮安", x: 291, y: 234, dot: [289, 252] },
  { name: "盐城", x: 519, y: 287, dot: [518, 306] },
  { name: "泰州", x: 468, y: 517, dot: [466, 536] },
  { name: "扬州", x: 356, y: 532, dot: [356, 552] },
  { name: "滁州", x: 123, y: 568, dot: [120, 586] },
  { name: "南京", x: 222, y: 616, dot: [221, 637], capital: true },
  { name: "马鞍山", x: 160, y: 717, dot: [158, 736] },
  { name: "芜湖", x: 144, y: 797, dot: [142, 816] },
  { name: "铜陵", x: 8, y: 901, dot: [8, 920] },
  { name: "宣城", x: 214, y: 901, dot: [213, 920] },
  { name: "常州", x: 480, y: 681, dot: [478, 700] },
  { name: "南通", x: 679, y: 638, dot: [678, 656] },
  { name: "苏州", x: 612, y: 812, dot: [609, 830] },
  { name: "湖州", x: 504, y: 913, dot: [503, 932] },
  { name: "嘉兴", x: 648, y: 951, dot: [648, 970] },
  { name: "杭州", x: 519, y: 1111, dot: [517, 1089], capital: true },
  { name: "上海", x: 804, y: 828, dot: [803, 847], capital: true },
];

const Polylines = ({ tile, lines, color, width }) => (
  <g
    transform={tile}
    fill="none"
    stroke={color}
    strokeWidth={width}
    strokeLinejoin="round"
    strokeLinecap="round"
  >
    {lines.map(points => (
      <polyline key={points} points={points} vectorEffect="non-scaling-stroke" />
    ))}
  </g>
);

const Polygons = ({ tile, shapes, color }) => (
  <g transform={tile} fill={color}>
    {shapes.map(points => (
      <polygon key={points} points={points} />
    ))}
  </g>
);

const LAND = "#f2f3fa";
const WATER = "#a7cdf7";

function DeviceMap() {
  return (
    <svg>
      <defs>
        <filter id="pinShadow" x="-50%" y="-50%" width="200%" height="200%">
          <feGaussianBlur stdDeviation="4" />
        </filter>
      </defs>
      <Polygons tile={TILE_NORTH} shapes={[landNorth]} color={LAND} />
      <Polygons tile={TILE_EAST} shapes={[landEast, ...islands]} color={LAND} />
      <Polygons tile={TILE_NORTH} shapes={lakesNorth} color={WATER} />
      <Polygons tile={TILE_SOUTH} shapes={lakesSouth} color={WATER} />
      <Polylines tile={TILE_NORTH} lines={riversNorth} color="#b9dafa" width="3" />
      <Polylines tile={TILE_SOUTH} lines={riversSouth} color="#b9dafa" width="3" />
      <Polylines tile={TILE_NORTH} lines={bordersNorth} color="#b9bcc6" width="2" />
      <Polylines tile={TILE_SOUTH} lines={bordersSouth} color="#b9bcc6" width="2" />
      <Polylines tile={TILE_EAST} lines={bordersEast} color="#8fa3bd" width="2" />
      <Polylines tile={TILE_NORTH} lines={minorNorth} color="#f8e6be" width="3" />
      <Polylines tile={TILE_SOUTH} lines={minorSouth} color="#f8e6be" width="3" />
      <Polylines tile={TILE_EAST} lines={minorEast} color="#f8e6be" width="3" />
      <Polylines tile={TILE_NORTH} lines={roadsNorth} color="#f7d674" width="4" />
      <Polylines tile={TILE_SOUTH} lines={roadsSouth} color="#f7d674" width="4" />
      <Polylines tile={TILE_EAST} lines={roadsEast} color="#f7d674" width="4" />

      <g
        fontSize="26"
        fontWeight="500"
        textAnchor="middle"
        stroke="#fff"
        strokeWidth="4"
        strokeLinejoin="round"
        paintOrder="stroke"
      >
        {cities.map(({ name, x, y, dot, capital }) => (
          <g key={name}>
            {capital ? (
              <>
                <rect
                  x={dot[0] - 6}
                  y={dot[1] - 6}
                  width="13"
                  height="13"
                  rx="3"
                  fill="#fff"
                  stroke="#dc7f76"
                  strokeWidth="2"
                />
                <rect
                  x={dot[0] - 3}
                  y={dot[1] - 3}
                  width="7"
                  height="7"
                  fill="#d4655a"
                  stroke="none"
                />
              </>
            ) : (
              <circle
                cx={dot[0]}
                cy={dot[1]}
                r="6"
                fill="#dc8074"
                stroke="#c96a62"
                strokeWidth="1"
              />
            )}
            <text
              x={x}
              y={y + 10}
              fontSize={capital ? 28 : 26}
              fontWeight={capital ? 600 : 500}
              fill={capital ? "#262b3b" : "#525868"}
            >
              {name}
            </text>
          </g>
        ))}
        <text x="891" y="1061" fill="#5276b4" strokeWidth="3">
          杭州湾
        </text>
      </g>

      <ellipse
        cx="828"
        cy="833"
        rx="18"
        ry="7"
        fill="#000"
        opacity=".5"
        transform="rotate(-25 828 833)"
        filter="url(#pinShadow)"
      />
      <path
        d="M812 836c-8-12-29-20-29-41a29 29 0 0158 0c0 21-21 29-29 41z"
        fill="#595959"
      />
      <g
        fill="none"
        stroke="#fff"
        strokeWidth="3"
        strokeLinejoin="round"
        strokeLinecap="round"
      >
        <path d="M805 786l22 13-6 6-23-14z" />
        <path d="M799 797l22 13 7-5M798 814v-12h5l4-3M803 802v5" />
      </g>
    </svg>
  );
}

function Select({ id, label, options, width = "100%", height }) {
  const [value, setValue] = useState(options[0]);

  return (
    <SelectWrap $width={width}>
      <SelectBox
        id={id}
        aria-label={label}
        $height={height}
        value={value}
        onChange={e => setValue(e.target.value)}
      >
        {options.map(option => (
          <option key={option}>{option}</option>
        ))}
      </SelectBox>
      <SelectArrow>
        <ArrowDown />
      </SelectArrow>
    </SelectWrap>
  );
}

function BrowserBar() {
  return (
    <Browser>
      <TabStrip>
        <TrafficLights>
          <Light $color="#ed6a5e" />
          <Light $color="#f5bf4f" />
          <Light $color="#61c554" />
        </TrafficLights>
        {tabsBefore.map(([icon, text], i) => (
          <Tab key={i} $wide $last={i === tabsBefore.length - 1}>
            {favicons[icon]}
            <TabText>{text}</TabText>
          </Tab>
        ))}
        <ActiveTab>
          {favicons.globe}
          <ActiveTitle>S</ActiveTitle>
          <Line size={18} d="M2 2l14 14M16 2L2 16" />
        </ActiveTab>
        {tabsAfter.map(([icon, text], i) => (
          <Tab key={i}>
            {favicons[icon]}
            <TabText>{text}</TabText>
          </Tab>
        ))}
        <NewTab aria-label="新标签页">
          <Line size={22} d="M11 1v20M1 11h20" />
        </NewTab>
        <TabSearch aria-label="搜索标签页">
          <Line size={18} d="M2 5l7 8 7-8" />
        </TabSearch>
      </TabStrip>
      <Toolbar>
        <ToolButtons>
          <ToolButton aria-label="后退">
            <Line d="M28 16H5M16 5L5 16l11 11" />
          </ToolButton>
          <ToolButton aria-label="前进" $dim>
            <Line d="M4 16h23M16 5l11 11-11 11" />
          </ToolButton>
          <ToolButton aria-label="重新加载">
            <Line d="M27 17a11 11 0 11-3-9l3 3M27 3v9h-9" />
          </ToolButton>
          <ToolButton aria-label="主页">
            <Line d="M6 28V12l10-8 10 8v16h-7v-9h-6v9z" />
          </ToolButton>
        </ToolButtons>
        <AddressBar>
          <Unsafe>
            <svg width="24" height="24" viewBox="0 0 24 24">
              <path d="M7 0h10l7 7v10l-7 7H7l-7-7V7z" fill="#eca49c" />
              <path d="M8 8l8 8M16 8l-8 8" stroke="#433733" strokeWidth="3" />
            </svg>
            不安全
          </Unsafe>
          <Url>
            <s>https</s>://<b>192.168.122.32</b>
            :18443/v2/zh/ops/devices/new?model=sscam
          </Url>
          <Line d="M16 3l3.800 9.200 10 .8-7.600 6.500 2.300 9.700-8.500-5.200-8.500 5.200 2.300-9.700L2.200 13l10-.8z" />
        </AddressBar>
        <ToolbarEnd>
          <Line d="M3 6h7a3.500 3.500 0 017 0h9v8a4 4 0 010 8v8H3v-8a4 4 0 000-8z" />
          <ToolDivider />
          <Avatar>j</Avatar>
          <svg width="32" height="32" viewBox="0 0 32 32" fill="currentColor">
            <circle cx="16" cy="5" r="3" />
            <circle cx="16" cy="16" r="3" />
            <circle cx="16" cy="27" r="3" />
          </svg>
        </ToolbarEnd>
      </Toolbar>
    </Browser>
  );
}

function SideMenu() {
  return (
    <Sidebar>
      <Menu>
        {menuItems.map(({ text, icon, active, selected, mark }) => (
          <MenuItem
            key={text}
            href="#"
            $sub={!icon}
            $active={active}
            $selected={selected}
          >
            {icon && menuIcons[icon]}
            {text}
            {mark && (
              <Mark $left={mark.left} $top={mark.top}>
                {mark.text}
              </Mark>
            )}
          </MenuItem>
        ))}
      </Menu>
      <Collapse>
        <Line size={28} d="M13 2L3 14l10 12M27 2L17 14l10 12" />
        收回
      </Collapse>
    </Sidebar>
  );
}

export default function App() {
  return (
    <Shell>
      <GlobalStyle />
      <BrowserBar />
      <Header>
        <Brand href="#">
          <Logo size={48} />
          StarRiver
        </Brand>
        <Nav>
          {navItems.map((item, i) => (
            <NavItem href="#" key={item} $active={i === 0}>
              {item}
            </NavItem>
          ))}
        </Nav>
        <HeaderTools>
          <Select
            id="area"
            label="区域"
            options={["上行", "下行"]}
            width="440px"
            height={60}
          />
          <LangBadge>ZH</LangBadge>
          <Gear />
          <Person />
        </HeaderTools>
      </Header>
      <Body>
        <SideMenu />
        <Main>
          <Breadcrumb>
            {["运维", "设备", "摄像头"].map(item => (
              <React.Fragment key={item}>
                <a href="#">{item}</a>
                <Line size={20} stroke={2} color="#555">
                  <path d="M4 1l12 9-12 9" />
                </Line>
              </React.Fragment>
            ))}
            <CurrentCrumb>添加</CurrentCrumb>
          </Breadcrumb>
          <Card>
            <TitleRow>
              <BackButton aria-label="返回">
                <Line size={18} color="#fff" d="M13 1L4 9l9 8" />
              </BackButton>
              <Title>创建摄像头</Title>
            </TitleRow>
            <Columns>
              <Form>
                {fields.map(field => (
                  <Field key={field.id}>
                    <FieldLabel htmlFor={field.id}>
                      {field.label}
                      {field.required && <span>*</span>}
                    </FieldLabel>
                    <FieldControl $full={field.full}>
                      {field.options ? (
                        <Select
                          id={field.id}
                          options={field.options}
                          height={80}
                        />
                      ) : (
                        <TextBox
                          id={field.id}
                          placeholder={field.placeholder}
                          defaultValue={field.value}
                        />
                      )}
                    </FieldControl>
                  </Field>
                ))}
              </Form>
              <MapPane>
                <DeviceMap />
                <InfoCard>
                  <InfoLine>所属域：上行</InfoLine>
                  <InfoLine>经度：121.51075244899391</InfoLine>
                  <InfoLine>纬度：31.243234851214375</InfoLine>
                  <InfoHint>
                    <p>拖动设备或点击右侧按钮修改坐标</p>
                    <button aria-label="修改坐标">
                      <svg width="28" height="28" viewBox="0 0 28 28">
                        <path
                          d="M23 1l-5 6 3 4 6-5c3 7-3 14-10 11L7 28l-6-6 11-10C9 5 16-2 23 1z"
                          fill="#366ef9"
                        />
                      </svg>
                    </button>
                  </InfoHint>
                </InfoCard>
              </MapPane>
            </Columns>
          </Card>
          <FocusFrame />
        </Main>
      </Body>
    </Shell>
  );
}
